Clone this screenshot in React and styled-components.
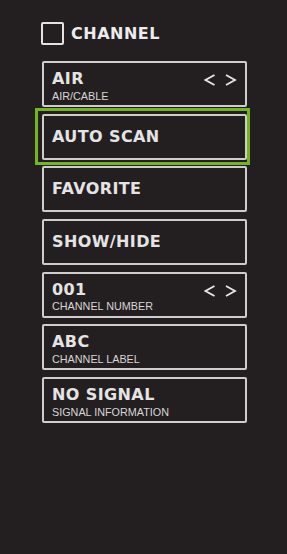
import React from "react";
import styled, { createGlobalStyle } from "styled-components";

const GlobalStyle = createGlobalStyle`
  html, body {
    margin: 0;
    padding: 0;
    background: #231f20;
  }
  body {
    font-family: "DejaVu Sans", sans-serif;
    min-height: 554px;
  }
`;

const Panel = styled.div`
  padding: 22px 0 40px 42px;
  background: #231f20;
  min-height: 554px;
  box-sizing: border-box;
`;

const Header = styled.div`
  display: flex;
  align-items: center;
  gap: 7px;
  margin-left: -1px;
  height: 23px;
`;

const Checkbox = styled.div`
  width: 23px;
  height: 23px;
  box-sizing: border-box;
  border: 2px solid #e2e2e2;
  border-radius: 2px;
`;

const HeaderTitle = styled.span`
  font-family: "DejaVu Sans", sans-serif;
  font-weight: 700;
  font-size: 16px;
  letter-spacing: 0.5px;
  color: #ececec;
`;

const List = styled.div`
  display: flex;
  flex-direction: column;
  gap: 6.7px;
  margin-top: 16px;
  width: 205px;
`;

const Item = styled.div`
  position: relative;
  box-sizing: border-box;
  height: 46px;
  border: 2px solid #cdcdcd;
  border-radius: 2px;
  padding: ${(p) => (p.$twoLine ? "7px 8px 0 8px" : "0 8px")};
  display: flex;
  align-items: ${(p) => (p.$twoLine ? "flex-start" : "center")};
  justify-content: space-between;

  ${(p) =>
    p.$selected &&
    `
    &::after {
      content: "";
      position: absolute;
      top: -8px;
      left: -9px;
      right: -5px;
      bottom: -7px;
      border: 3px solid #72b51f;
      pointer-events: none;
    }
  `}
`;

const Texts = styled.div`
  display: flex;
  flex-direction: column;
`;

const Title = styled.div`
  font-family: "DejaVu Sans", sans-serif;
  font-weight: 700;
  font-size: 16px;
  line-height: 18px;
  letter-spacing: 0.4px;
  color: #e4e4e4;
  white-space: nowrap;
`;

const Subtitle = styled.div`
  font-family: "Liberation Sans", Arial, sans-serif;
  font-size: 10.8px;
  line-height: 12px;
  margin-top: 1.5px;
  color: #d6d6d6;
  white-space: nowrap;
`;

const Arrows = styled.svg`
  margin-top: 4px;
  flex: none;
`;

function ArrowPair() {
  return (
    <Arrows width="33" height="12" viewBox="0 0 33 12">
      <polyline
        points="10.5,1 1.5,6 10.5,11"
        fill="none"
        stroke="#e8e8e8"
        strokeWidth="1.8"
      />
      <polyline
        points="22,1 31,6 22,11"
        fill="none"
        stroke="#e8e8e8"
        strokeWidth="1.8"
      />
    </Arrows>
  );
}

const items = [
  { title: "AIR", sub: "AIR/CABLE", arrows: true },
  { title: "AUTO SCAN", selected: true },
  { title: "FAVORITE" },
  { title: "SHOW/HIDE" },
  { title: "001", sub: "CHANNEL NUMBER", arrows: true },
  { title: "ABC", sub: "CHANNEL LABEL" },
  { title: "NO SIGNAL", sub: "SIGNAL INFORMATION" },
];

export default function App() {
  return (
    <>
      <GlobalStyle />
      <Panel>
        <Header>
          <Checkbox />
          <HeaderTitle>CHANNEL</HeaderTitle>
        </Header>
        <List>
          {items.map((item) => (
            <Item
              key={item.title}
              $twoLine={!!item.sub}
              $selected={item.selected}
            >
              <Texts>
                <Title>{item.title}</Title>
                {item.sub && <Subtitle>{item.sub}</Subtitle>}
              </Texts>
              {item.arrows && <ArrowPair />}
            </Item>
          ))}
        </List>
      </Panel>
    </>
  );
}
